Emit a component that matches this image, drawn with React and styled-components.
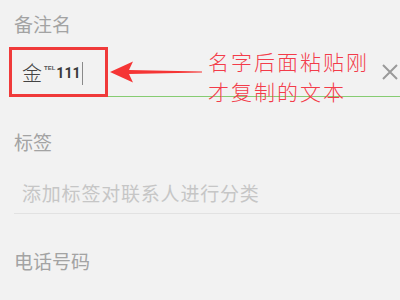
import React from 'react';
import styled, { createGlobalStyle } from 'styled-components';

const GlobalStyle = createGlobalStyle`
  html, body {
    margin: 0;
    padding: 0;
    background: #f2f2f2;
  }
  body {
    font-family: "Noto Sans CJK SC", "Noto Sans", sans-serif;
  }
`;

const Page = styled.div`
  position: relative;
  width: 400px;
  height: 300px;
  overflow: hidden;
  background: #f2f2f2;
  padding-top: 14px;
  box-sizing: border-box;
`;

const Label = styled.div`
  height: 20px;
  line-height: 20px;
  margin: ${(p) => p.$top || 0}px 0 0 14px;
  font-size: 19px;
  color: #a3a3a3;
`;

const InputRow = styled.div`
  display: flex;
  align-items: center;
  height: 46px;
  margin: 16px 0 0 14px;
  padding-left: 8px;
  border-bottom: 1px solid ${(p) => p.$line};
`;

const Value = styled.div`
  flex: 1;
  display: flex;
  align-items: center;
  color: #444;
`;

const Han = styled.span`
  font-size: 20px;
  line-height: 1;
  font-weight: 300;
`;

const Sup = styled.span`
  font-family: "Liberation Sans", Arial, sans-serif;
  font-size: 6px;
  font-weight: bold;
  color: #555;
  align-self: flex-start;
  margin: 3px 1px 0 2px;
`;

const Digits = styled.span`
  font-family: Roboto, "Liberation Sans", sans-serif;
  font-size: 14px;
  font-weight: bold;
  color: #3a3a3a;
`;

const Caret = styled.span`
  width: 1px;
  height: 23px;
  margin-left: 2px;
  background: #8a8a8a;
`;

const Clear = styled.svg`
  width: 16px;
  height: 16px;
  margin-right: 2px;
  margin-bottom: 2px;
`;

const Placeholder = styled.div`
  height: 40px;
  line-height: 40px;
  margin: 21px 0 0 14px;
  padding-left: 8px;
  font-size: 19px;
  letter-spacing: 0.8px;
  color: #c6c6c6;
  border-bottom: 1px solid #e2e2e2;
`;

const Highlight = styled.div`
  position: absolute;
  left: 9px;
  top: 47px;
  width: 99px;
  height: 50px;
  box-sizing: border-box;
  border: 3px solid #f03a3a;
`;

const Arrow = styled.svg`
  position: absolute;
  left: 108px;
  top: 60px;
  width: 96px;
  height: 24px;
`;

const Note = styled.div`
  position: absolute;
  left: 208px;
  top: 46px;
  font-size: 21px;
  font-weight: 300;
  line-height: 30px;
  letter-spacing: 2px;
  color: #f33c4a;
`;

export default function App() {
  return (
    <>
      <GlobalStyle />
      <Page>
        <Label>备注名</Label>
        <InputRow $line="#86cc72">
          <Value>
            <Han>金</Han>
            <Sup>TEL</Sup>
            <Digits>111</Digits>
            <Caret />
          </Value>
          <Clear viewBox="0 0 16 16">
            <path d="M1 1 L15 15 M15 1 L1 15" stroke="#9a9a9a" strokeWidth="2" fill="none" />
          </Clear>
        </InputRow>

        <Label $top={35}>标签</Label>
        <Placeholder>添加标签对联系人进行分类</Placeholder>

        <Label $top={37}>电话号码</Label>

        <Highlight />
        <Arrow viewBox="0 0 96 24">
          <path d="M2 12 L25 1.5 L21 10 L94 11.5 L94 12.5 L21 14 L25 22.5 Z" fill="#f53535" />
        </Arrow>
        <Note>
          名字后面粘贴刚
          <br />
          才复制的文本
        </Note>
      </Page>
    </>
  );
}
